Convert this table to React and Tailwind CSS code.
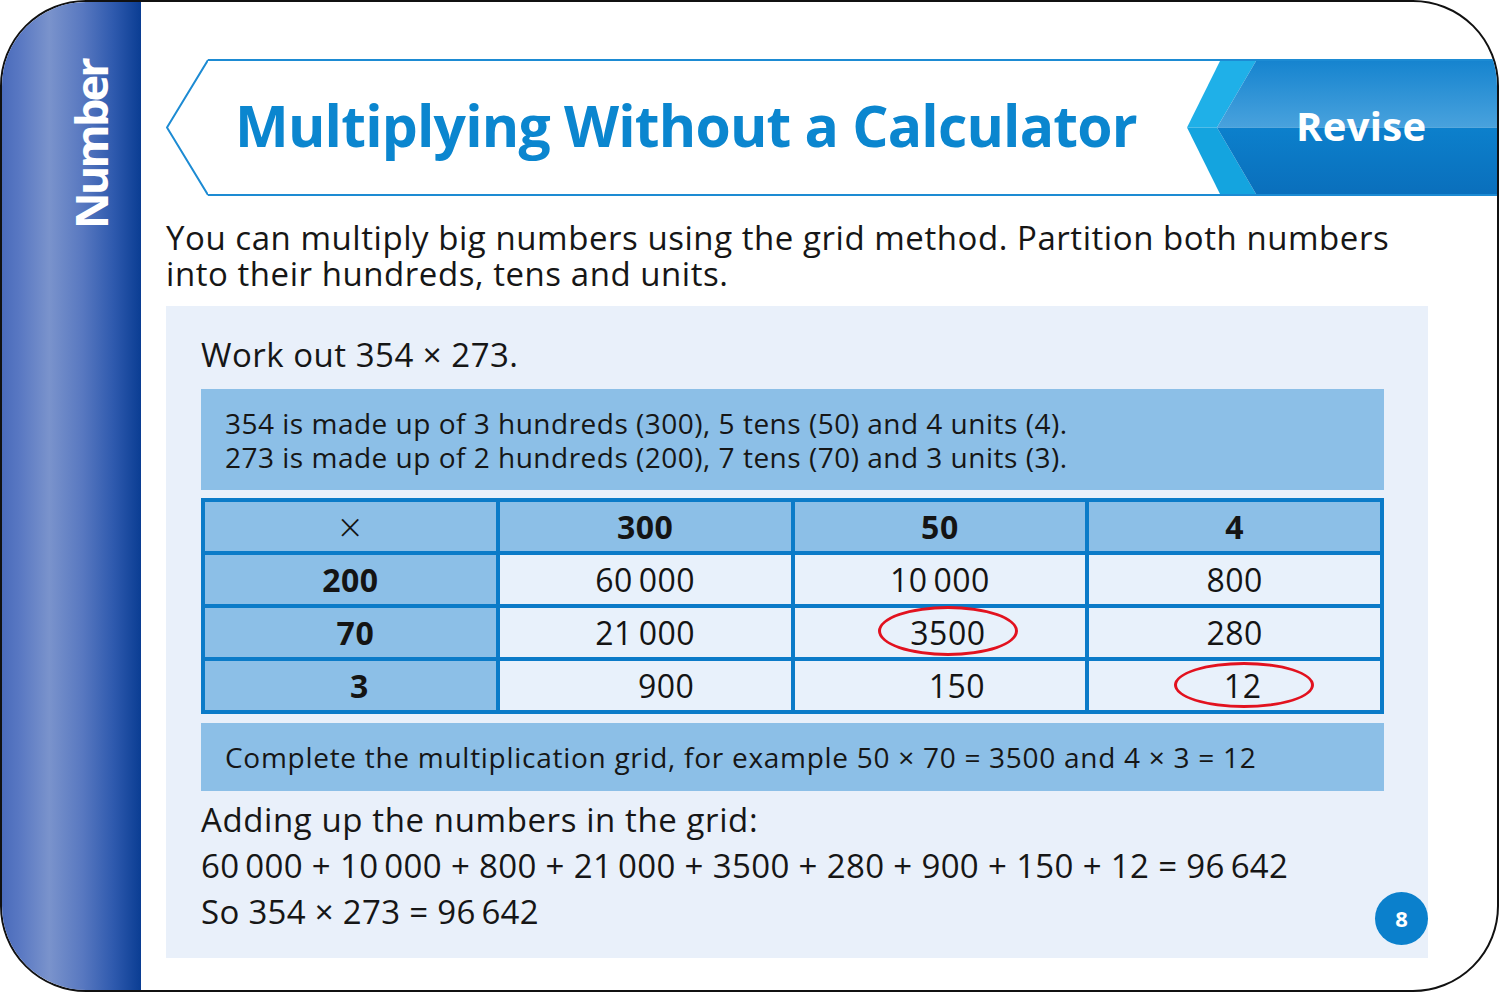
import React from 'react';

const font = { fontFamily: '"Open Sans", "Noto Sans", sans-serif' };

const ts = '\u2009';

// grid rows: [label, cells...], each cell { v, shift, ring }
const header = ['300', '50', '4'];
const rows = [
  { label: '200', shift: 0, cells: [{ v: `60${ts}000` }, { v: `10${ts}000` }, { v: '800' }] },
  { label: '70', shift: 10, cells: [{ v: `21${ts}000` }, { v: '3500', shift: 16, ring: 'a' }, { v: '280' }] },
  { label: '3', shift: 18, cells: [{ v: '900', shift: 42 }, { v: '150', shift: 34 }, { v: '12', shift: 16, ring: 'b' }] },
];

const shiftClass = {
  0: '',
  10: 'ml-[10px]',
  16: 'ml-[16px]',
  18: 'ml-[18px]',
  34: 'ml-[34px]',
  42: 'ml-[42px]',
};

const ReviseBanner = () => (
  <div className="relative w-[310px] h-full flex items-center pb-[4px]">
    <svg className="absolute inset-0" width="310" height="133" viewBox="0 0 310 133">
      <defs>
        <linearGradient id="topDark" x1="0" y1="0" x2="0" y2="1">
          <stop offset="0" stopColor="#1684cf" />
          <stop offset="1" stopColor="#49a2dd" />
        </linearGradient>
        <linearGradient id="botDark" x1="0" y1="0" x2="0" y2="1">
          <stop offset="0" stopColor="#0c80cc" />
          <stop offset="1" stopColor="#0a6fbc" />
        </linearGradient>
      </defs>
      <polygon points="33,0 69,0 30,66.5 0,66.5" fill="#1fb0e8" />
      <polygon points="0,66.5 30,66.5 69,133 33,133" fill="#14a4df" />
      <polygon points="69,0 310,0 310,66.5 30,66.5" fill="url(#topDark)" />
      <polygon points="30,66.5 310,66.5 310,133 69,133" fill="url(#botDark)" />
    </svg>
    <span className="relative pl-[109px] text-[40px] font-bold text-white leading-none tracking-[0.3px]">Revise</span>
  </div>
);

const Cell = ({ children, head, bold, shift = 0, ring, big }) => (
  <div
    className={`relative flex items-center justify-center h-[49px] leading-none text-[#141414] tracking-[0.5px] ${
      big ? 'text-[40px] font-light' : 'text-[32px]'
    } ${head ? 'bg-[#8cbfe7]' : 'bg-[#e8f1fb]'} ${bold ? 'font-bold' : ''}`}
  >
    <span className={shiftClass[shift]}>{children}</span>
    {ring === 'a' && (
      <div className="absolute left-[83px] top-[-2px] w-[140px] h-[50px] rounded-[50%] border-[3px] border-[#e2121f]" />
    )}
    {ring === 'b' && (
      <div className="absolute left-[85px] top-[1px] w-[140px] h-[46px] rounded-[50%] border-[3px] border-[#e2121f]" />
    )}
  </div>
);

export default function App() {
  return (
    <div className="w-[1500px] h-[992px] bg-white" style={font}>
      <div className="w-[1499px] h-[992px] rounded-[86px] border-2 border-[#111] overflow-hidden flex">
        {/* Sidebar */}
        <div className="w-[139px] shrink-0 bg-[linear-gradient(90deg,#4a6bbb_0%,#5877c2_12%,#7a93cc_34%,#5878c0_58%,#2f5aae_80%,#0a3d93_100%)]">
          <div className="h-[227px] flex flex-col justify-end pl-[66px]">
            <span className="[writing-mode:vertical-rl] rotate-180 text-[45px] font-bold text-white leading-none tracking-[-2.8px]">
              Number
            </span>
          </div>
        </div>

        {/* Main */}
        <div className="flex-1 pl-[25px] pt-[57px]">
          {/* Header */}
          <div className="flex h-[137px]">
            <svg width="42" height="137" viewBox="0 0 42 137" className="shrink-0">
              <polyline points="42,1 1,68.5 42,136" fill="none" stroke="#1d8bd3" strokeWidth="2" />
            </svg>
            <div className="flex-1 flex border-y-2 border-[#1d8bd3]">
              <div className="flex-1 flex items-center pl-[27px] pb-[5px]">
                <h1 className="text-[57px] font-bold text-[#0b86cf] leading-none tracking-[-0.8px]">
                  Multiplying Without a Calculator
                </h1>
              </div>
              <ReviseBanner />
            </div>
          </div>

          <p className="mt-[24px] text-[33px] leading-[36px] text-[#161616] w-[1245px] tracking-[0.55px]">
            You can multiply big numbers using the grid method. Partition both numbers into their hundreds, tens and units.
          </p>

          {/* Worked example panel */}
          <div className="relative mt-[14px] w-[1262px] h-[652px] bg-[#e9f0fa] pl-[35px] pr-[44px] pt-[29px]">
            <div className="text-[33px] leading-[40px] text-[#161616] tracking-[0.5px]">Work out 354 &times; 273.</div>

            <div className="mt-[14px] h-[101px] bg-[#8cbfe7] pl-[24px] pt-[17px] text-[28px] leading-[34px] text-[#161616] tracking-[0.5px]">
              <div>354 is made up of 3 hundreds (300), 5 tens (50) and 4 units (4).</div>
              <div>273 is made up of 2 hundreds (200), 7 tens (70) and 3 units (3).</div>
            </div>

            <div className="mt-[8px] grid grid-cols-4 gap-[4px] p-[4px] bg-[#0b7bc8]">
              <Cell head big>
                &times;
              </Cell>
              {header.map((h) => (
                <Cell key={h} head bold>
                  {h}
                </Cell>
              ))}
              {rows.map((r) => (
                <React.Fragment key={r.label}>
                  <Cell head bold shift={r.shift}>
                    {r.label}
                  </Cell>
                  {r.cells.map((c) => (
                    <Cell key={c.v} shift={c.shift} ring={c.ring}>
                      {c.v}
                    </Cell>
                  ))}
                </React.Fragment>
              ))}
            </div>

            <div className="mt-[9px] h-[68px] bg-[#8cbfe7] pl-[24px] flex items-center text-[28px] text-[#161616] tracking-[0.72px]">
              Complete the multiplication grid, for example 50 &times; 70 = 3500 and 4 &times; 3 = 12
            </div>

            <div className="mt-[6px] text-[33px] leading-[46px] text-[#161616]">
              <div className="tracking-[0.6px]">Adding up the numbers in the grid:</div>
              <div className="tracking-[0.35px]">
                60{ts}000 + 10{ts}000 + 800 + 21{ts}000 + 3500 + 280 + 900 + 150 + 12 = 96{ts}642
              </div>
              <div className="tracking-[0.3px]">So 354 &times; 273 = 96{ts}642</div>
            </div>

            <div className="absolute right-0 bottom-[13px] w-[53px] h-[53px] rounded-full bg-[#0b80cc] flex items-center justify-center text-[22px] font-bold text-white">
              8
            </div>
          </div>
        </div>
      </div>
    </div>
  );
}
